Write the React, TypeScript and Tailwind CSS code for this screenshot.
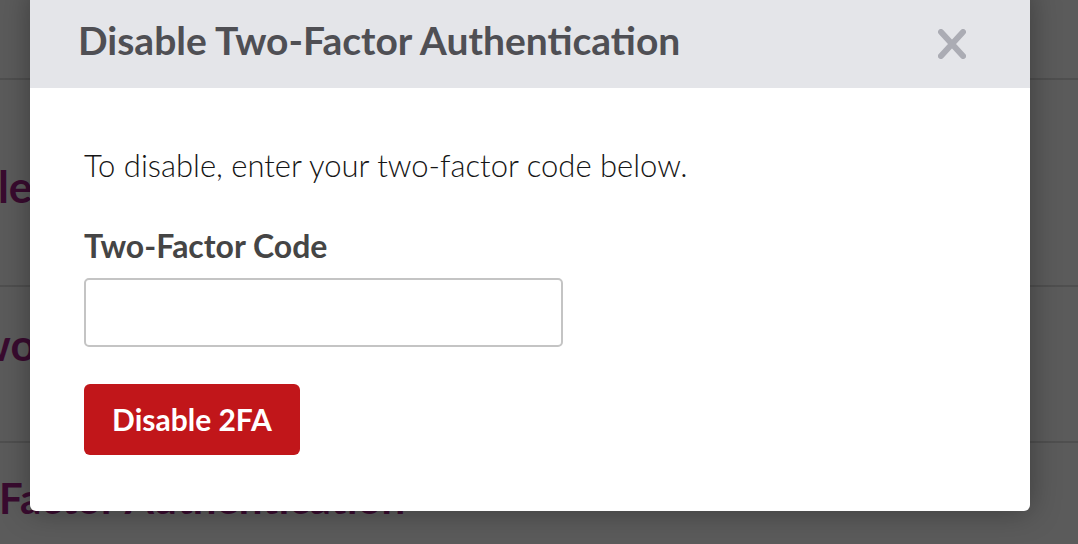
import React from 'react';

export default function App() {
    return (
        <div className="relative h-[544px] w-full overflow-hidden bg-[#5b5b5b] font-['Lato',sans-serif]">
            {/* page behind the overlay */}
            <div className="flex flex-col">
                <div className="h-[80px] border-b-2 border-[#4f4f4f]" />
                <div className="h-[207px] border-b-2 border-[#4f4f4f] pt-[84px]">
                    <div className="ml-[-113px] whitespace-nowrap text-[44px] font-bold leading-none text-[#390b2f]">Disable</div>
                </div>
                <div className="h-[156px] border-b-2 border-[#4f4f4f] pt-[35px]">
                    <div className="ml-[-47px] whitespace-nowrap text-[44px] font-bold leading-none text-[#390b2f]">Two</div>
                </div>
                <div className="pt-[34px]">
                    <div className="ml-[-1px] whitespace-nowrap text-[42px] font-bold leading-none text-[#390b2f]">Factor Authentication</div>
                </div>
            </div>

            {/* modal */}
            <div className="absolute left-[30px] top-[-10px] w-[1000px] overflow-hidden rounded-md bg-white shadow-[0_0_30px_rgba(0,0,0,0.35)]">
                <div className="flex h-[98px] items-end justify-between bg-[#e4e5e9] pb-[28px] pl-[48px] pr-[64px]">
                    <h2 className="text-[39px] font-bold leading-none text-[#4f4f54]">Disable Two-Factor Authentication</h2>
                    <button className="mb-[1px] text-[#abacb4]">
                        <svg width="28" height="30" viewBox="0 0 28 30" fill="none" stroke="currentColor" strokeWidth="6" strokeLinecap="round">
                            <path d="M3 3L25 27M25 3L3 27" />
                        </svg>
                    </button>
                </div>
                <div className="flex flex-col items-start px-[54px] pb-[56px] pt-[62px]">
                    <p className="text-[31px] font-light leading-none text-[#151515]">To disable, enter your two-factor code below.</p>
                    <label className="mt-[49px] text-[32px] font-bold leading-none text-[#454545]">Two-Factor Code</label>
                    <input className="mt-[16px] h-[69px] w-[479px] rounded-[5px] border-2 border-[#c4c4c4] px-3 text-[24px] outline-none" />
                    <button className="mt-[37px] h-[71px] w-[216px] rounded-[6px] bg-[#c1161a] text-[30px] font-bold text-white">Disable 2FA</button>
                </div>
            </div>
        </div>
    );
}
